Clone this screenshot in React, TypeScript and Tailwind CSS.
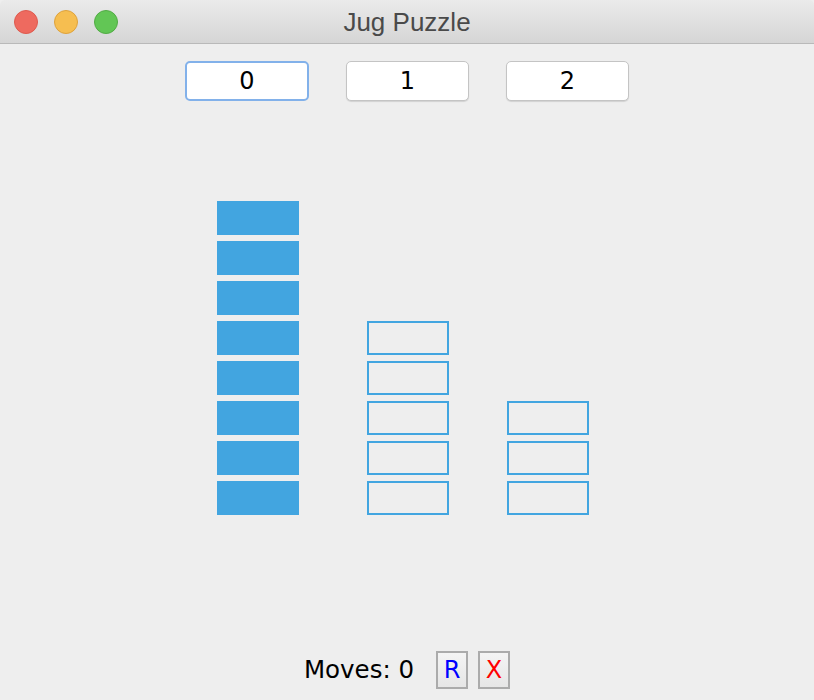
import React from 'react';

const JUGS = [
  { filled: 8, capacity: 8 },
  { filled: 0, capacity: 5 },
  { filled: 0, capacity: 3 },
];

const FONT = { fontFamily: '"DejaVu Sans", "Liberation Sans", sans-serif' };

function TitleBar() {
  return (
    <div className="grid h-[44px] grid-cols-[1fr_auto_1fr] items-center rounded-t-[5px] border-b border-[#b9b9b9] bg-gradient-to-b from-[#ebebeb] to-[#d5d5d5]">
      <div className="flex items-center gap-[16px] pl-[14px]">
        <span className="h-[24px] w-[24px] rounded-full border border-[#de5a4e] bg-[#ee6a5f]" />
        <span className="h-[24px] w-[24px] rounded-full border border-[#dea23c] bg-[#f6be50]" />
        <span className="h-[24px] w-[24px] rounded-full border border-[#52ab45] bg-[#62c655]" />
      </div>
      <div className="text-[26px] leading-none text-[#4a4a4a]" style={{ fontFamily: '"Liberation Sans", Arial, sans-serif' }}>
        Jug Puzzle
      </div>
      <div />
    </div>
  );
}

function JugButton({ label, focused }: { label: string; focused?: boolean }) {
  return (
    <button
      className={
        focused
          ? 'flex h-[40px] w-[124px] items-center justify-center rounded-[5px] border-2 border-[#82b1ea] bg-white text-[24px] text-black'
          : 'flex h-[40px] w-[123px] items-center justify-center rounded-[5px] border border-[#c4c4c4] bg-white text-[24px] text-black shadow-[0_1px_1px_rgba(0,0,0,0.12)]'
      }
      style={FONT}
    >
      {label}
    </button>
  );
}

function Jug({ filled, capacity, className }: { filled: number; capacity: number; className?: string }) {
  const units = Array.from({ length: capacity }, (_, i) => capacity - i <= filled);
  return (
    <div className={`flex flex-col gap-[6px] ${className ?? ''}`}>
      {units.map((full, idx) =>
        full ? (
          <div key={idx} className="h-[34px] w-[82px] bg-[#42a5e0]" />
        ) : (
          <div key={idx} className="h-[34px] w-[82px] border-2 border-[#42a5e0]" />
        )
      )}
    </div>
  );
}

export default function App() {
  return (
    <div className="flex h-[700px] w-[814px] flex-col bg-[#eeeeee]" style={FONT}>
      <TitleBar />

      <div className="mt-[17px] flex justify-center gap-[37px]">
        <JugButton label="0" focused />
        <JugButton label="1" />
        <JugButton label="2" />
      </div>

      <div className="mt-[100px] flex items-end pl-[217px]">
        <Jug {...JUGS[0]} />
        <Jug {...JUGS[1]} className="ml-[68px]" />
        <Jug {...JUGS[2]} className="ml-[58px]" />
      </div>

      <div className="mb-[11px] mt-auto flex items-center justify-center">
        <span className="text-[24.5px] text-black">Moves: 0</span>
        <button className="ml-[22px] flex h-[38px] w-[32px] items-center justify-center border-2 border-[#ababab] bg-gradient-to-b from-[#f4f4f4] to-[#e6e6e6] text-[24px] text-[#0000ff]">
          R
        </button>
        <button className="ml-[10px] flex h-[38px] w-[32px] items-center justify-center border-2 border-[#ababab] bg-gradient-to-b from-[#f4f4f4] to-[#e6e6e6] text-[24px] text-[#ff0000]">
          X
        </button>
      </div>
    </div>
  );
}
